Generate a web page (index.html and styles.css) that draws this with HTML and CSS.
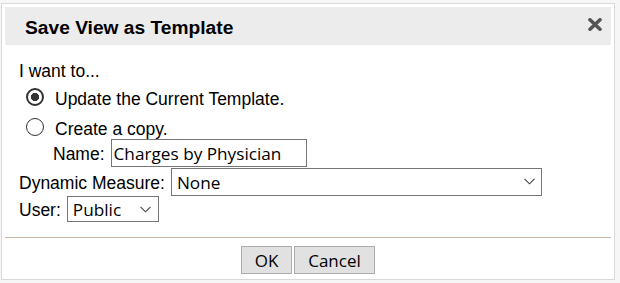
FILE: index.html
```html
<!DOCTYPE html>
<html lang="en">

<head>
    <meta charset="UTF-8">
    <meta name="viewport" content="width=device-width, initial-scale=1.0">

    <title>Save View as Template</title>

    <link rel="stylesheet" href="styles.css">
</head>

<body>
    <div class="dialog">
        <div class="dialog-header">
            <span class="dialog-title">Save View as Template</span>
            <svg class="close-icon" width="14" height="13" viewBox="0 0 14 13">
                <path d="M2 1.8 L12 11.2 M12 1.8 L2 11.2" stroke="#555" stroke-width="3.6" stroke-linecap="round" fill="none" />
            </svg>
        </div>

        <div class="dialog-body">
            <div class="intro">I want to...</div>

            <label class="radio-row first">
                <input type="radio" name="mode" class="radio" checked>
                <span>Update the Current Template.</span>
            </label>
            <label class="radio-row second">
                <input type="radio" name="mode" class="radio">
                <span>Create a copy.</span>
            </label>

            <div class="field name-field">
                <label for="templateName">Name:</label>
                <input type="text" id="templateName" class="text-input" value="Charges by Physician">
            </div>

            <div class="field measure-field">
                <label for="measure">Dynamic Measure:</label>
                <span class="select-wrap measure-select">
                    <select id="measure">
                        <option>None</option>
                    </select>
                    <svg class="chevron" width="11" height="7" viewBox="0 0 11 7">
                        <path d="M0.5 0.8 L5.5 5.8 L10.5 0.8" stroke="#444" stroke-width="1.1" fill="none" />
                    </svg>
                </span>
            </div>

            <div class="field user-field">
                <label for="user">User:</label>
                <span class="select-wrap user-select">
                    <select id="user">
                        <option>Public</option>
                    </select>
                    <svg class="chevron" width="11" height="7" viewBox="0 0 11 7">
                        <path d="M0.5 0.8 L5.5 5.8 L10.5 0.8" stroke="#444" stroke-width="1.1" fill="none" />
                    </svg>
                </span>
            </div>
        </div>

        <hr class="divider">

        <div class="dialog-footer">
            <button class="btn ok-btn">OK</button>
            <button class="btn cancel-btn">Cancel</button>
        </div>
    </div>
</body>

</html>
```

FILE: styles.css
```css
/* General styles */
body {
    margin: 0;
    padding: 3px 0 0 1px;
    background: #f6f6f6;
    font-family: 'Liberation Sans', Arial, sans-serif;
    font-size: 17.5px;
    color: #000;
}

/* Dialog box */
.dialog {
    box-sizing: border-box;
    width: 614px;
    height: 277px;
    padding: 3px;
    background: #ffffff;
    border: 1px solid #d9d9d9;
    display: flex;
    flex-direction: column;
}

.dialog-header {
    height: 38px;
    flex-shrink: 0;
    background: #ececec;
    display: flex;
    align-items: center;
    justify-content: space-between;
    padding: 0 9px 0 20px;
}

.dialog-title {
    font-size: 19.2px;
    font-weight: bold;
    padding-top: 4px;
}

.close-icon {
    margin-bottom: 4px;
}

/* Body rows */
.dialog-body {
    padding: 16px 0 0 14px;
}

.intro {
    height: 21px;
    line-height: 21px;
}

.radio-row {
    display: flex;
    align-items: flex-start;
    line-height: 21px;
    padding-left: 7px;
}

.radio-row.first {
    height: 26px;
    padding-top: 6px;
}

.radio-row.second {
    height: 21px;
    padding-top: 4px;
}

.radio-row span {
    padding-top: 1px;
}

.radio {
    appearance: none;
    -webkit-appearance: none;
    box-sizing: border-box;
    width: 18px;
    height: 18px;
    margin: 0 11px 0 0;
    border: 1px solid #333;
    border-radius: 50%;
    background: #fff;
}

.radio:checked {
    border: 2px solid #333;
    background: radial-gradient(circle, #333 0 3.8px, #fff 4.4px);
}

.field {
    display: flex;
    align-items: center;
}

.field label {
    margin-right: 6px;
    line-height: 21px;
    padding-top: 3px;
}

.name-field {
    height: 28px;
    padding-left: 34px;
}

.measure-field {
    height: 28px;
    margin-top: 1px;
}

.user-field {
    height: 26px;
}

.text-input {
    box-sizing: border-box;
    width: 196px;
    height: 28px;
    margin: 0;
    padding: 0 2px;
    border: 1px solid #767676;
    font-family: 'Open Sans', sans-serif;
    font-size: 17.2px;
    color: #000;
}

/* Selects */
.select-wrap {
    position: relative;
    display: inline-block;
}

.select-wrap select {
    appearance: none;
    -webkit-appearance: none;
    box-sizing: border-box;
    margin: 0;
    padding: 0 0 0 5px;
    border: 1px solid #767676;
    border-radius: 0;
    background: #fff;
    font-family: 'Open Sans', sans-serif;
    font-size: 17.2px;
    color: #000;
}

.measure-select select {
    width: 371px;
    height: 28px;
}

.user-select select {
    width: 92px;
    height: 26px;
}

.chevron {
    position: absolute;
    top: 10px;
    pointer-events: none;
}

.measure-select .chevron {
    right: 7px;
}

.user-select .chevron {
    top: 10px;
    right: 8px;
}

/* Footer */
.divider {
    border: none;
    height: 1px;
    background: #c8b6a6;
    margin: 15px 0 0 0;
}

.dialog-footer {
    display: flex;
    justify-content: center;
    gap: 2px;
    margin-top: 8px;
}

.btn {
    box-sizing: border-box;
    height: 28px;
    margin: 0;
    padding: 0;
    background: #e1e1e1;
    border: 1px solid #adadad;
    font-family: 'Open Sans', sans-serif;
    font-size: 17px;
    color: #000;
}

.ok-btn {
    width: 51px;
}

.cancel-btn {
    width: 81px;
}
```
